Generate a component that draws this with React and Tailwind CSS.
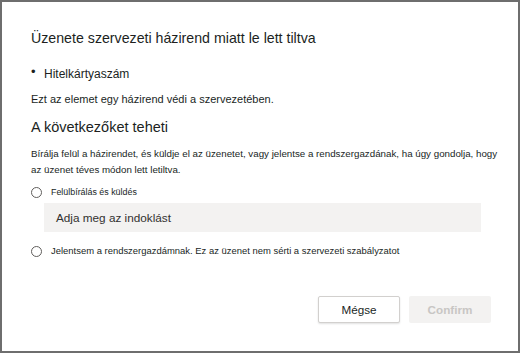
export default function App() {
  return (
    <div
      className="w-[520px] h-[353px] border-2 border-[#6e6e6e] bg-white flex flex-col pl-[29px] pt-[26px] text-[#201f1e]"
      style={{ fontFamily: '"Liberation Sans", Arial, sans-serif' }}
    >
      <div className="text-[14.2px] leading-[20px] whitespace-nowrap">
        Üzenete szervezeti házirend miatt le lett tiltva
      </div>
      <div className="mt-[18px] flex items-center text-[12px] leading-[16px]">
        <span className="w-[13px] text-[13px] leading-[16px] -mt-[4px]">•</span>
        <span>Hitelkártyaszám</span>
      </div>
      <div className="mt-[9px] text-[11px] leading-[16px] whitespace-nowrap">
        Ezt az elemet egy házirend védi a szervezetében.
      </div>
      <div className="mt-[10px] text-[14.5px] leading-[20px] whitespace-nowrap">
        A következőket teheti
      </div>
      <div className="mt-[9px] text-[9.75px] leading-[16px] whitespace-nowrap text-[#201f1e]">
        Bírálja felül a házirendet, és küldje el az üzenetet, vagy jelentse a rendszergazdának, ha úgy gondolja, hogy
        <br />
        az üzenet téves módon lett letiltva.
      </div>
      <div className="mt-[6px] flex items-center h-[16px]">
        <span className="w-[11px] h-[11px] rounded-full border border-[#605e5c] bg-white shrink-0" />
        <span className="ml-[9px] text-[8.9px] leading-[16px] whitespace-nowrap">Felülbírálás és küldés</span>
      </div>
      <div className="mt-[3px] ml-[13px] w-[437px] h-[29px] bg-[#f3f2f1] flex items-center pl-[12px] text-[11.75px] leading-[16px] text-[#323130]">
        Adja meg az indoklást
      </div>
      <div className="mt-[11px] flex items-center h-[16px]">
        <span className="w-[11px] h-[11px] rounded-full border border-[#605e5c] bg-white shrink-0" />
        <span className="ml-[9px] text-[9.45px] leading-[16px] whitespace-nowrap">
          Jelentsem a rendszergazdámnak. Ez az üzenet nem sérti a szervezeti szabályzatot
        </span>
      </div>
      <div className="mt-[37px] flex justify-end gap-[9px] pr-[27px]">
        <button className="w-[82px] h-[27px] bg-white border border-[#d2d0ce] rounded-[2px] shadow-[0_1px_2px_rgba(0,0,0,0.12)] text-[11.7px] text-[#201f1e]">
          Mégse
        </button>
        <button className="w-[82px] h-[27px] bg-[#f3f2f1] rounded-[2px] text-[11.7px] font-bold text-[#c8c6c4]">
          Confirm
        </button>
      </div>
    </div>
  );
}
